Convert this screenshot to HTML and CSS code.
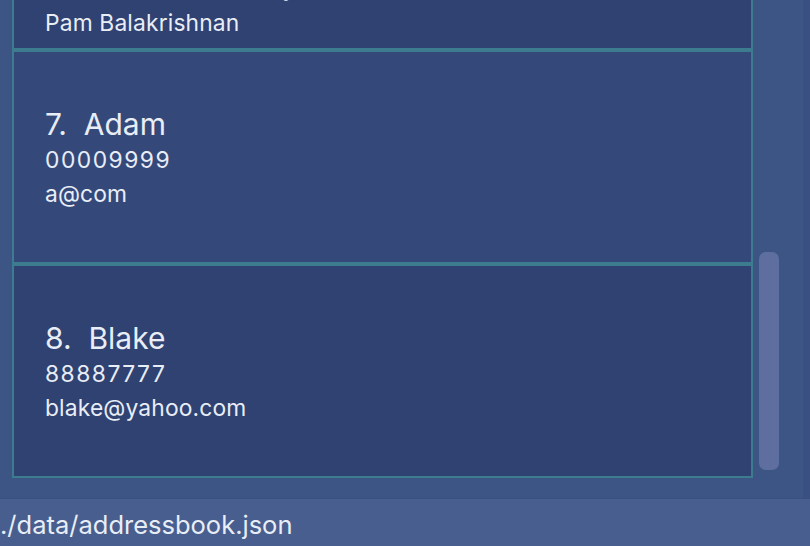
FILE: index.html
```html
<!DOCTYPE html>
<html lang="en">
<head>
<meta charset="utf-8">
<title>Address Book</title>
<link rel="stylesheet" href="styles.css">
</head>
<body>
<div class="app">
  <div class="list-area">
    <div class="list">
      <div class="card card-even card-top">
        <div class="name">6.&nbsp;&nbsp;Pam</div>
        <div class="detail phone">91234567</div>
        <div class="detail">pam@example.com</div>
        <div class="detail kin">Next of Kin: Aunt Emily</div>
        <div class="detail">Pam Balakrishnan</div>
      </div>
      <div class="card card-odd">
        <div class="name">7.&nbsp;&nbsp;Adam</div>
        <div class="detail phone">00009999</div>
        <div class="detail">a@com</div>
      </div>
      <div class="card card-even">
        <div class="name">8.&nbsp;&nbsp;Blake</div>
        <div class="detail phone">88887777</div>
        <div class="detail">blake@yahoo.com</div>
      </div>
    </div>
    <div class="scroll">
      <div class="track"><div class="thumb"></div></div>
      <div class="edge"></div>
    </div>
  </div>
  <div class="status">./data/addressbook.json</div>
</div>
</body>
</html>
```
FILE: styles.css
```css
html, body {
  margin: 0;
  padding: 0;
}
body {
  width: 810px;
  height: 546px;
  overflow: hidden;
  background: #3d5585;
  font-family: Inter, "Open Sans", sans-serif;
  color: #e9edf6;
}
.app {
  display: flex;
  flex-direction: column;
  height: 546px;
}
.list-area {
  height: 498px;
  display: flex;
  flex-direction: row;
  border-bottom: 1px solid #3a5080;
  overflow: hidden;
}
.list {
  width: 741px;
  margin-left: 12px;
  padding-bottom: 20px;
  display: flex;
  flex-direction: column;
  justify-content: flex-end;
  overflow: hidden;
}
.card {
  box-sizing: border-box;
  flex: none;
  border: 2px solid #3d7c8e;
  padding-left: 31px;
}
.card-odd,
.card-even {
  height: 214px;
  padding-top: 54px;
}
.card-top {
  height: auto;
  padding-bottom: 9px;
}
.card-odd {
  background: #34497a;
}
.card-even {
  background: #2f4271;
}
.name {
  font-size: 30px;
  line-height: 36px;
}
.detail {
  font-size: 22.8px;
  line-height: 34px;
  letter-spacing: 0.15px;
  margin-top: 1px;
  margin-bottom: -1px;
}
.kin {
  margin-bottom: 1px;
}
.phone {
  letter-spacing: 1.5px;
}
.scroll {
  flex: 1;
  display: flex;
}
.track {
  width: 50px;
}
.thumb {
  margin-top: 252px;
  margin-left: 6px;
  width: 20px;
  height: 218px;
  border-radius: 7px;
  background: #5e6f9f;
}
.edge {
  width: 7px;
  background: #3a5082;
}
.status {
  flex: 1;
  background: #485e8e;
  font-size: 25.5px;
  line-height: 43px;
  padding-top: 4px;
  padding-left: 0;
}
```
